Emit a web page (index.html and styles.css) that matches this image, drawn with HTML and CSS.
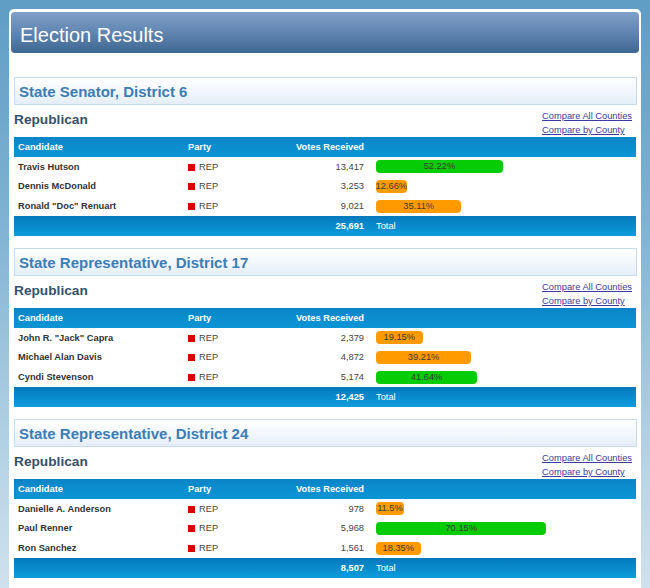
FILE: index.html
```html
<!DOCTYPE html>
<html lang="en">
<head>
<meta charset="utf-8">
<title>Election Results</title>
<link rel="stylesheet" href="styles.css">
</head>
<body>
<div class="panel">
  <h1 class="banner">Election Results</h1>
  <div class="content">

    <section class="race">
      <h2 class="race-title">State Senator, District 6</h2>
      <div class="party-head">
        <h3 class="party-name">Republican</h3>
        <div class="links"><a href="#">Compare All Counties</a><a href="#">Compare by County</a></div>
      </div>
      <table class="results">
        <colgroup><col class="c-name"><col class="c-party"><col class="c-votes"><col class="c-bar"></colgroup>
        <thead><tr><th>Candidate</th><th>Party</th><th class="num">Votes Received</th><th></th></tr></thead>
        <tbody>
          <tr><td class="name">Travis Hutson</td><td class="party"><span class="sq"></span>REP</td><td class="num">13,417</td><td class="bar-cell"><div class="track"><div class="bar win" style="width:52.22%"><span>52.22%</span></div></div></td></tr>
          <tr><td class="name">Dennis McDonald</td><td class="party"><span class="sq"></span>REP</td><td class="num">3,253</td><td class="bar-cell"><div class="track"><div class="bar" style="width:12.66%"><span>12.66%</span></div></div></td></tr>
          <tr><td class="name">Ronald "Doc" Renuart</td><td class="party"><span class="sq"></span>REP</td><td class="num">9,021</td><td class="bar-cell"><div class="track"><div class="bar" style="width:35.11%"><span>35.11%</span></div></div></td></tr>
        </tbody>
        <tfoot><tr><td></td><td></td><td class="num total">25,691</td><td class="bar-cell">Total</td></tr></tfoot>
      </table>
    </section>

    <section class="race">
      <h2 class="race-title">State Representative, District 17</h2>
      <div class="party-head">
        <h3 class="party-name">Republican</h3>
        <div class="links"><a href="#">Compare All Counties</a><a href="#">Compare by County</a></div>
      </div>
      <table class="results">
        <colgroup><col class="c-name"><col class="c-party"><col class="c-votes"><col class="c-bar"></colgroup>
        <thead><tr><th>Candidate</th><th>Party</th><th class="num">Votes Received</th><th></th></tr></thead>
        <tbody>
          <tr><td class="name">John R. "Jack" Capra</td><td class="party"><span class="sq"></span>REP</td><td class="num">2,379</td><td class="bar-cell"><div class="track"><div class="bar" style="width:19.15%"><span>19.15%</span></div></div></td></tr>
          <tr><td class="name">Michael Alan Davis</td><td class="party"><span class="sq"></span>REP</td><td class="num">4,872</td><td class="bar-cell"><div class="track"><div class="bar" style="width:39.21%"><span>39.21%</span></div></div></td></tr>
          <tr><td class="name">Cyndi Stevenson</td><td class="party"><span class="sq"></span>REP</td><td class="num">5,174</td><td class="bar-cell"><div class="track"><div class="bar win" style="width:41.64%"><span>41.64%</span></div></div></td></tr>
        </tbody>
        <tfoot><tr><td></td><td></td><td class="num total">12,425</td><td class="bar-cell">Total</td></tr></tfoot>
      </table>
    </section>

    <section class="race">
      <h2 class="race-title">State Representative, District 24</h2>
      <div class="party-head">
        <h3 class="party-name">Republican</h3>
        <div class="links"><a href="#">Compare All Counties</a><a href="#">Compare by County</a></div>
      </div>
      <table class="results">
        <colgroup><col class="c-name"><col class="c-party"><col class="c-votes"><col class="c-bar"></colgroup>
        <thead><tr><th>Candidate</th><th>Party</th><th class="num">Votes Received</th><th></th></tr></thead>
        <tbody>
          <tr><td class="name">Danielle A. Anderson</td><td class="party"><span class="sq"></span>REP</td><td class="num">978</td><td class="bar-cell"><div class="track"><div class="bar" style="width:11.5%"><span>11.5%</span></div></div></td></tr>
          <tr><td class="name">Paul Renner</td><td class="party"><span class="sq"></span>REP</td><td class="num">5,968</td><td class="bar-cell"><div class="track"><div class="bar win" style="width:70.15%"><span>70.15%</span></div></div></td></tr>
          <tr><td class="name">Ron Sanchez</td><td class="party"><span class="sq"></span>REP</td><td class="num">1,561</td><td class="bar-cell"><div class="track"><div class="bar" style="width:18.35%"><span>18.35%</span></div></div></td></tr>
        </tbody>
        <tfoot><tr><td></td><td></td><td class="num total">8,507</td><td class="bar-cell">Total</td></tr></tfoot>
      </table>
    </section>

  </div>
</div>
</body>
</html>
```

FILE: styles.css
```css
html, body {
  margin: 0;
  padding: 0;
  height: 588px;
  overflow: hidden;
}

body {
  background: linear-gradient(to bottom, #5f9dc5 0px, #7fb2d2 220px, #b6d3e5 460px, #cfe1ec 588px);
  font-family: "Liberation Sans", Arial, sans-serif;
}

.panel {
  margin: 9px 0 0 9px;
  width: 632px;
  box-sizing: border-box;
  height: 600px;
  padding: 3px 2px 0;
  background: #ffffff;
  border-radius: 5px 5px 0 0;
}

.banner {
  margin: 0;
  height: 41px;
  box-sizing: border-box;
  padding: 6px 9px 0;
  line-height: 35px;
  font-size: 20px;
  font-weight: normal;
  color: #ffffff;
  border-radius: 4px;
  background: linear-gradient(to bottom, #7fa0c8 0%, #6488b4 45%, #3e6792 100%);
}

.content {
  padding: 24px 2px 0 3px;
}

.race + .race {
  margin-top: 12px;
}

.race-title {
  margin: 0;
  height: 28px;
  box-sizing: border-box;
  border: 1px solid #c7dbec;
  padding-left: 4px;
  line-height: 27px;
  font-size: 15px;
  font-weight: bold;
  color: #3d7db5;
  background: linear-gradient(to bottom, #ffffff 0%, #f4f8fc 45%, #e4eef8 100%);
}

.party-head {
  display: flex;
  justify-content: space-between;
  align-items: flex-start;
  height: 32px;
  box-sizing: border-box;
  padding-top: 4px;
}

.party-name {
  margin: 3px 0 0;
  font-size: 13.7px;
  line-height: 16px;
  font-weight: bold;
  color: #34506e;
}

.links {
  display: flex;
  flex-direction: column;
  margin-right: 5px;
  font-size: 9.3px;
  line-height: 14px;
}

.links a {
  color: #3b3ba0;
  text-decoration: underline;
}

.results {
  width: 622px;
  table-layout: fixed;
  border-collapse: collapse;
  font-size: 9.3px;
}

.c-name { width: 170px; }
.c-party { width: 88px; }
.c-votes { width: 96px; }

.results th,
.results td {
  padding: 0 4px;
  height: 19.8px;
  white-space: nowrap;
}

.results th {
  text-align: left;
  color: #ffffff;
  font-weight: bold;
  background: linear-gradient(to bottom, #0a84c7 0%, #0b8ecf 50%, #0c94d4 100%);
}

.results .num {
  text-align: right;
}

.results td {
  color: #444444;
}

.results td.name {
  color: #333333;
  font-weight: bold;
}

.sq {
  display: inline-block;
  width: 7px;
  height: 7px;
  margin-right: 4px;
  background: #d80000;
  vertical-align: -1px;
}

.results td.bar-cell {
  padding-left: 8px;
}

.track {
  width: 243px;
}

.bar {
  height: 13px;
  display: flex;
  justify-content: center;
  line-height: 13px;
  border-radius: 4px;
  background: #ff9a00;
  color: #3a3a3a;
  white-space: nowrap;
}

.bar.win {
  background: #06cc06;
}

.results tfoot td {
  color: #ffffff;
  background: linear-gradient(to bottom, #0479bc 0%, #088cce 55%, #0d9edd 100%);
}

.results tfoot td.total {
  font-weight: bold;
}
```
